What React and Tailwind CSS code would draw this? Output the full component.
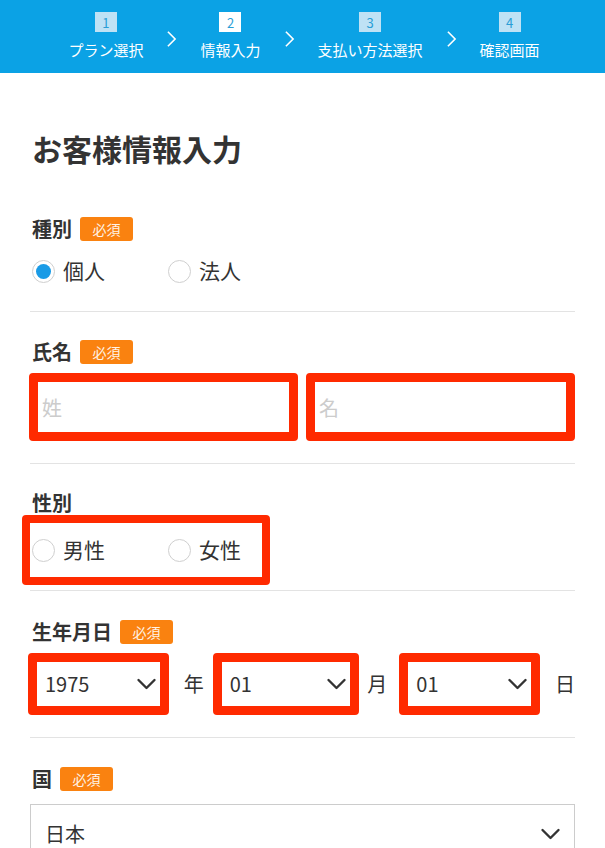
import { useState } from "react";

const steps = [
    { n: 1, label: "プラン選択" },
    { n: 2, label: "情報入力", current: true },
    { n: 3, label: "支払い方法選択" },
    { n: 4, label: "確認画面" },
];

function Chevron({ className }) {
    return (
        <svg viewBox="0 0 20 12" className={className} fill="none" stroke="currentColor" strokeWidth="2.4" strokeLinecap="round" strokeLinejoin="round">
            <polyline points="2,2 10,10 18,2" />
        </svg>
    );
}

function Badge() {
    return (
        <span className="inline-flex items-center justify-center w-[53px] h-[24px] rounded-[3px] bg-[#fa8210] text-[14px] leading-none text-[#fff3e6] font-normal">
            必須
        </span>
    );
}

function Label({ children, required, className = "" }) {
    return (
        <div className={`flex items-center gap-[8px] h-[24px] ${className}`}>
            <span className="text-[20px] font-bold text-[#333]">{children}</span>
            {required && <Badge />}
        </div>
    );
}

function Radio({ label, checked, onClick }) {
    return (
        <button type="button" onClick={onClick} className="shrink-0 flex items-center w-[136px] h-[30px] text-left">
            <span className="w-[23px] h-[23px] rounded-full border-[1.5px] border-[#cfcfcf] flex items-center justify-center bg-white">
                {checked && <span className="w-[15px] h-[15px] rounded-full bg-[#1a9be6]" />}
            </span>
            <span className="ml-[8px] text-[21px] text-[#333]">{label}</span>
        </button>
    );
}

function Select({ value, options, className = "" }) {
    return (
        <div className={`relative ${className}`}>
            <select
                defaultValue={value}
                className="appearance-none w-full h-full bg-white text-[20px] text-[#333] pl-[8px] outline-none"
            >
                {options.map((o) => (
                    <option key={o} value={o}>{o}</option>
                ))}
            </select>
            <Chevron className="absolute right-[3px] top-1/2 -translate-y-1/2 w-[21px] h-[12px] text-[#333] pointer-events-none" />
        </div>
    );
}

export default function App() {
    const [kind, setKind] = useState("個人");
    const [gender, setGender] = useState(null);

    const years = Array.from({ length: 80 }, (_, i) => String(1940 + i));
    const twoDigits = (n) => Array.from({ length: n }, (_, i) => String(i + 1).padStart(2, "0"));

    return (
        <div className="min-h-[848px] bg-white font-['Noto_Sans_CJK_JP','Noto_Sans',sans-serif]">
            {/* progress steps */}
            <header className="h-[73px] bg-[#0ba2e5] flex justify-center items-start pt-[12px] gap-[23px] pl-[3px]">
                {steps.map((s, i) => (
                    <div key={s.n} className="flex items-start gap-[23px]">
                        <div className="flex flex-col items-center">
                            <span className={`w-[22px] h-[20px] flex items-center justify-center text-[13px] leading-none text-[#2a9ed6] ${s.current ? "bg-white" : "bg-[#bfe2f5]"}`}>
                                {s.n}
                            </span>
                            <span className="mt-[8px] text-[15px] leading-[20px] text-white whitespace-nowrap">{s.label}</span>
                        </div>
                        {i < steps.length - 1 && (
                            <svg viewBox="0 0 12 20" className="w-[11px] h-[18px] mt-[18px] text-white" fill="none" stroke="currentColor" strokeWidth="1.8">
                                <polyline points="2,2 10,10 2,18" />
                            </svg>
                        )}
                    </div>
                ))}
            </header>

            <main className="px-[30px]">
                <h1 className="pt-[55px] text-[30px] leading-[40px] font-bold text-[#333] pl-[2px]">お客様情報入力</h1>

                {/* 種別 */}
                <section className="border-b border-[#e3e3e3] pb-[25px] pl-[2px]">
                    <Label required className="mt-[49px]">種別</Label>
                    <div className="flex mt-[15px]">
                        {["個人", "法人"].map((k) => (
                            <Radio key={k} label={k} checked={kind === k} onClick={() => setKind(k)} />
                        ))}
                    </div>
                </section>

                {/* 氏名 */}
                <section className="border-b border-[#e3e3e3] pb-[22px]">
                    <Label required className="mt-[28px] pl-[2px]">氏名</Label>
                    <div className="flex gap-[8px] mt-[9px] -ml-[1px]">
                        {["姓", "名"].map((p) => (
                            <div key={p} className="flex-1 h-[68px] border-[9px] border-[#ff2a00] rounded-[4px] bg-white">
                                <input
                                    placeholder={p}
                                    className="w-full h-full px-[4px] text-[20px] text-[#333] placeholder:text-[#cccccc] outline-none bg-white"
                                />
                            </div>
                        ))}
                    </div>
                </section>

                {/* 性別 */}
                <section className="border-b border-[#e3e3e3] pb-[5px]">
                    <Label className="mt-[27px] pl-[2px]">性別</Label>
                    <div className="-ml-[8px] w-[248px] h-[70px] border-[8px] border-[#ff2a00] rounded-[4px] flex items-center pl-[2px] overflow-hidden">
                        {["男性", "女性"].map((g) => (
                            <Radio key={g} label={g} checked={gender === g} onClick={() => setGender(g)} />
                        ))}
                    </div>
                </section>

                {/* 生年月日 */}
                <section className="border-b border-[#e3e3e3] pb-[22px]">
                    <Label required className="mt-[29px] pl-[2px]">生年月日</Label>
                    <div className="flex items-center mt-[9px] -ml-[2px] text-[20px] text-[#333]">
                        <div className="w-[142px] h-[62px] border-[9px] border-[#ff2a00] rounded-[4px]">
                            <Select value="1975" options={years} className="h-full" />
                        </div>
                        <span className="ml-[15px] mr-[9px]">年</span>
                        <div className="w-[148px] h-[62px] border-[9px] border-[#ff2a00] rounded-[4px]">
                            <Select value="01" options={twoDigits(12)} className="h-full" />
                        </div>
                        <span className="ml-[8px] mr-[12px]">月</span>
                        <div className="w-[142px] h-[62px] border-[9px] border-[#ff2a00] rounded-[4px]">
                            <Select value="01" options={twoDigits(31)} className="h-full" />
                        </div>
                        <span className="ml-[15px]">日</span>
                    </div>
                </section>

                {/* 国 */}
                <section>
                    <Label required className="mt-[29px] pl-[2px]">国</Label>
                    <div className="mt-[13px] h-[60px] border border-[#cccccc]">
                        <Select value="日本" options={["日本", "アメリカ", "中国", "韓国"]} className="h-full [&_select]:pl-[14px] [&_svg]:right-[13px]" />
                    </div>
                </section>
            </main>
        </div>
    );
}
